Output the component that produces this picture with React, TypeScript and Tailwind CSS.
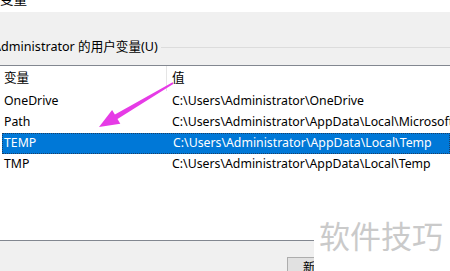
import React from "react";

const rows = [
  { name: "OneDrive", value: "C:\\Users\\Administrator\\OneDrive", sel: false },
  { name: "Path", value: "C:\\Users\\Administrator\\AppData\\Local\\Microsoft\\WindowsApps;", sel: false },
  { name: "TEMP", value: "C:\\Users\\Administrator\\AppData\\Local\\Temp", sel: true },
  { name: "TMP", value: "C:\\Users\\Administrator\\AppData\\Local\\Temp", sel: false },
];

export default function App() {
  return (
    <div
      className="relative w-[450px] h-[271px] overflow-hidden bg-[#f0f0f0] text-[12.3px] text-black"
      style={{ fontFamily: '"Segoe UI", "Noto Sans", "Noto Sans CJK SC", sans-serif' }}
    >
      {/* top white strip with cut title */}
      <div className="h-[12px] bg-white overflow-hidden">
        <div className="-mt-[7px] leading-[13px] text-[13.5px] whitespace-nowrap">变量</div>
      </div>

      {/* group label */}
      <div className="h-[53px] pt-[26px]">
        <div className="flex items-center h-[18px] -ml-[7px]">
          <span className="whitespace-nowrap leading-[18px] text-[12.6px]">Administrator 的用户变量(U)</span>
          <div className="flex-1 h-px bg-[#dcdcdc] ml-[3px]" />
        </div>
      </div>

      {/* list box */}
      <div className="h-[176px] bg-white border-y border-[#828790] whitespace-nowrap overflow-hidden">
        <div className="flex h-[25px] items-center">
          <div className="w-[166px] shrink-0 pl-[4px] text-[12.6px]">变量</div>
          <div className="w-px h-full shrink-0 bg-[#e5e5e5]" />
          <div className="pl-[5px] text-[12.6px]">值</div>
        </div>
        {rows.map((r) => (
          <div
            key={r.name}
            className={
              r.sel
                ? "ml-[2px] flex h-[21px] items-center bg-[#0078d7] text-white border border-dotted border-[#1c3f66]"
                : "ml-[2px] flex h-[21px] items-center"
            }
          >
            <div className={r.sel ? "w-[164px] shrink-0 pl-[1px]" : "w-[164px] shrink-0 pl-[2px]"}>{r.name}</div>
            <div className="pl-[6px] shrink-0">{r.value}</div>
          </div>
        ))}
      </div>

      {/* bottom button */}
      <div className="pl-[287px] pt-[16px]">
        <div className="w-[88px] h-[23px] border border-[#adadad] bg-[#e1e1e1] pl-[15px] flex items-center whitespace-nowrap">
          新建(W)...
        </div>
      </div>

      {/* watermark */}
      <div className="absolute left-[314px] top-[216px] w-[136px] h-[55px] bg-white">
        <div
          className="pl-[5px] pt-[2px] text-[31px] leading-[34px] text-[#cacaca] whitespace-nowrap"
          style={{ fontFamily: '"Noto Sans CJK SC", sans-serif' }}
        >
          软件技巧
        </div>
      </div>

      {/* arrow */}
      <svg className="absolute left-0 top-0" width="450" height="271" viewBox="0 0 450 271">
        <polygon
          points="172.6,82.3 173.6,83.8 117.5,119 120.3,123.7 99,127 112.1,109.9 114.9,114.6"
          fill="#e63be6"
        />
      </svg>
    </div>
  );
}
